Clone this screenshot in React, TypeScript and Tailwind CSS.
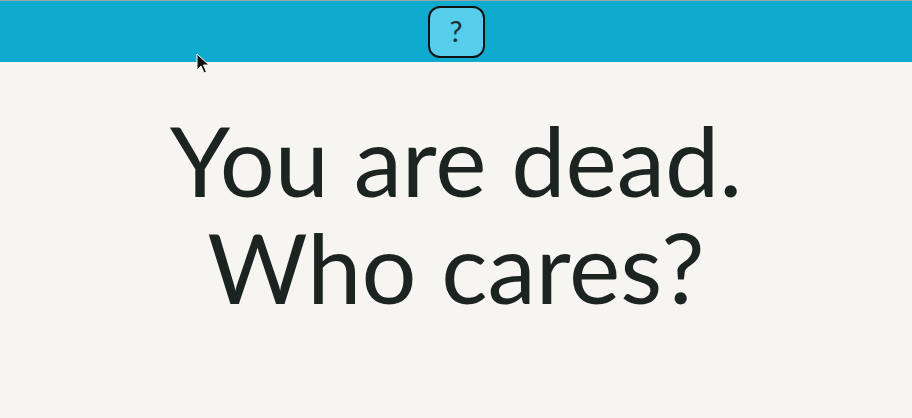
import React from 'react';

function Cursor() {
  return (
    <svg width="14" height="22" viewBox="0 0 14 22" className="absolute left-[196px] top-[53px]">
      <path d="M1 1 L1 17 L5 13 L8 20 L10.5 19 L7.5 12 L13 12 Z" fill="#111" stroke="#fff" strokeWidth="1" strokeLinejoin="round" />
    </svg>
  );
}

export default function App() {
  return (
    <div className="relative min-h-[418px] bg-[#f7f5f2] font-['Lato',sans-serif]">
      <header className="h-[62px] bg-[#0eabcf] border-t border-[#9aa3a6] flex items-center justify-center">
        <button className="w-[57px] h-[52px] rounded-[12px] border-2 border-[#111] bg-[#56cdea] text-[#1f2a30] text-[29px] font-normal leading-none flex items-center justify-center pb-[2px]">
          ?
        </button>
      </header>
      <main className="flex justify-center pt-[44px]">
        <h1 className="text-center text-[#1b2420] text-[97px] leading-[107px] font-normal">
          You are dead.
          <br />
          Who cares?
        </h1>
      </main>
      <Cursor />
    </div>
  );
}
